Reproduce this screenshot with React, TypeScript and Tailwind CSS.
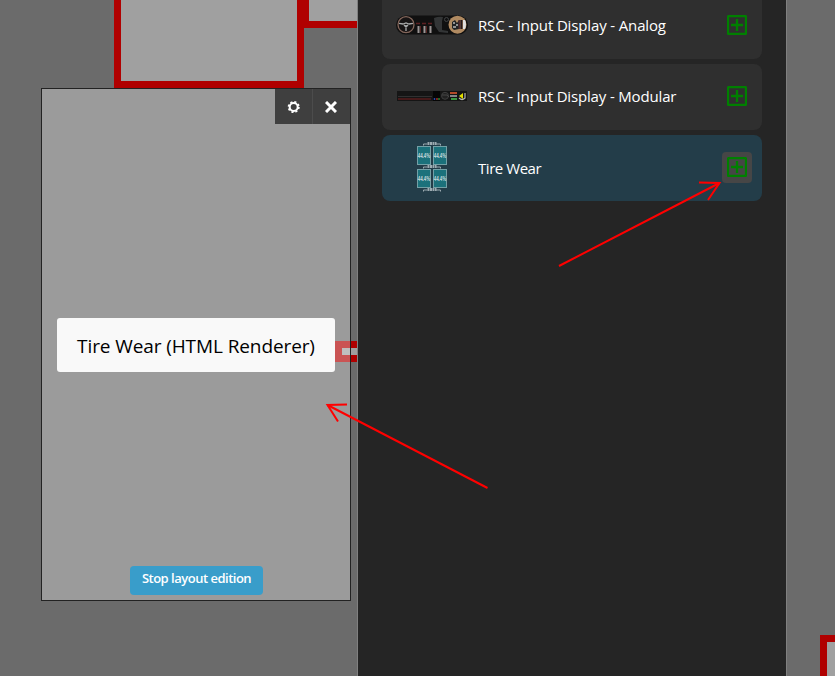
import React from "react";

function AddIcon() {
  return (
    <svg width="20" height="20" viewBox="0 0 20 20" fill="none" stroke="#008000" strokeWidth="2.3">
      <rect x="1" y="1" width="18" height="18" rx="1" />
      <path d="M4 10h12M10 4v12" />
    </svg>
  );
}

function AnalogThumb() {
  return (
    <svg width="72" height="20" viewBox="0 0 72 20" className="relative -top-px">
      <rect x="0" y="0.5" width="72" height="19" rx="9.5" fill="#101010" />
      <circle cx="10" cy="9.7" r="8" fill="#171414" stroke="#83665b" strokeWidth="1.3" />
      <path d="M3 8.3 7 9l3-1 3 1 4-.7M8 10l2 2 2-2M10 10v6" fill="none" stroke="#a8aaaa" strokeWidth="1.3" />
      <path d="M20 8.5h4M26 8.5h4M32 8.5h4" stroke="#5b2022" strokeWidth="1.5" />
      <path d="M22.5 11v7M28.5 11v7M34.5 11v7" stroke="#9b9595" strokeWidth="2" />
      <path d="M24.5 11v7M30.5 11v7" stroke="#572320" strokeWidth="1" />
      <path d="M38 3q5-2 9-1l-1 4v9l6 1v2l-9-1-4-6z" fill="#333536" />
      <circle cx="50.500" cy="4.500" r="2" fill="none" stroke="#414345" />
      <circle cx="61.500" cy="9.700" r="9" fill="#b08a61" />
      <path d="M56 7l3-2 2 3 2-3v9l-5 1-2-2z" fill="#202224" />
      <path d="M57 8h2M60 10h2M57 12h3" stroke="#b8b7b5" strokeWidth="1.3" />
      <path d="M63.500 5v9" stroke="#512b2d" strokeWidth="2" />
      <path d="M65.500 5v9" stroke="#24191c" strokeWidth="2" />
      <path d="M67 5h2q2 4 0 9h-2z" fill="#e0e0df" />
    </svg>
  );
}

function ModularThumb() {
  return (
    <svg width="70" height="10" viewBox="0 0 70 10" className="relative -top-px">
      <path d="M0 0h70v10H0z" fill="#151515" />
      <path d="M1 5.500h34" stroke="#303030" />
      <path d="M1 8h33" stroke="#782021" />
      <path d="M36 0h7v10h-7z" fill="#050505" />
      <path d="M37.500 7v2" stroke="#2749ae" strokeWidth="1.5" />
      <path d="M40 7v2" stroke="#a62b25" strokeWidth="1.5" />
      <path d="M42 7v2" stroke="#248433" strokeWidth="1.5" />
      <circle cx="48" cy="4.800" r="3.500" fill="#222" stroke="#3e3e3e" />
      <path d="M45 4h5l2 2" fill="none" stroke="#464646" />
      <path d="M53 2h7" stroke="#b44a28" strokeWidth="2" />
      <path d="M53 5h7" stroke="#aaa" strokeWidth="1.500" />
      <path d="M54 8h6" stroke="#3b9a40" strokeWidth="2" />
      <path d="M62 7q3 3 6 0V2" fill="none" stroke="#b4b4af" strokeWidth="1.200" />
      <path d="M62 5l4-3v6z" fill="#e4df00" />
    </svg>
  );
}

function TireThumb() {
  return (
    <svg width="32" height="52" viewBox="0 0 32 52" overflow="visible" className="relative -top-px">
      {[0, 23].map((y) => [0, 16].map((x) => (
        <g key={`${x}-${y}`}>
          <rect x={x + 1.5} y={y + 5.5} width="13" height="18" fill="#1b717b" stroke="#73a0a6" />
          <text x={x + 1.7} y={y + 17.3} fontFamily="Liberation Sans, sans-serif" fontSize="7" fontWeight="bold" textLength="12.5" lengthAdjust="spacingAndGlyphs" fill="#c9dadd">44.4%</text>
        </g>
      )))}
      {[2.5, 25.5, 48.500].map((y) => (
        <g key={y} fill="none" stroke="#9cabb1">
          <path d={`M7.5 ${y + 2}v-1.500h4M20 ${y + 0.5}h4.500v1.500`} />
          <path d={`M11.500 ${y}h9`} strokeWidth="3" strokeDasharray="2 .5" />
        </g>
      ))}
    </svg>
  );
}

interface OverlayRowProps {
  name: string;
  nameClass: string;
  selected?: boolean;
  children: React.ReactNode;
}

function OverlayRow({ name, nameClass, selected = false, children }: OverlayRowProps) {
  return (
    <div className={`flex h-[66px] shrink-0 items-center rounded-lg pl-[14px] pr-[10px] ${selected ? "bg-[#233d49]" : "bg-[#2f2f2f]"}`}>
      <div className="flex w-[72px] shrink-0 items-center justify-center">{children}</div>
      <span className={`ml-[10px] whitespace-nowrap text-[15px] leading-5 text-white ${nameClass}`}>{name}</span>
      <button aria-label={`Add ${name}`} className={`mb-[2px] ml-auto flex h-[31px] w-[30px] items-center justify-center rounded ${selected ? "bg-[#464646]" : ""}`}>
        <AddIcon />
      </button>
    </div>
  );
}

function TireWindow() {
  return (
    <section className="absolute left-[41px] top-[88px] flex h-[513px] w-[310px] flex-col border border-[#222] bg-white/33">
      <div className="flex h-[35px] shrink-0 justify-end">
        <button aria-label="Settings" className="flex w-[38px] items-center justify-center border-r border-[#4c4c4c] bg-[#3f3f3f]">
          <svg width="14" height="14" viewBox="0 0 14 14" fill="none" stroke="white">
            <circle cx="6.700" cy="7" r="4" strokeWidth="2" />
            <circle cx="6.700" cy="7" r="5.200" strokeWidth="1.700" strokeDasharray="2.100 1.984" />
          </svg>
        </button>
        <button aria-label="Close" className="flex w-[37px] items-center justify-center bg-[#3f3f3f] pr-[1px]">
          <svg width="12" height="12" viewBox="0 0 12 12" stroke="white" strokeWidth="3"><path d="M1 1l10 10M11 1L1 11" /></svg>
        </button>
      </div>
      <div className="ml-[15px] mt-[194px] flex h-[54px] w-[278px] shrink-0 items-center justify-center rounded-[3px] bg-[#f9f9f9] pt-[3px] text-black">
        <span className="whitespace-nowrap text-[19px] tracking-[-0.1px]">Tire Wear (HTML Renderer)</span>
      </div>
      <button className="mb-[5px] ml-[88px] mt-auto flex h-[29px] w-[133px] items-center justify-center rounded bg-[#399dca] pb-[3px] text-white">
        <span className="whitespace-nowrap text-[13px] font-semibold tracking-[-0.5px]">Stop layout edition</span>
      </button>
    </section>
  );
}

function Arrow({ line, head }: { line: string; head: string }) {
  return <g><path d={line} /><path d={head} /></g>;
}

export default function App() {
  return (
    <main className="relative flex h-[676px] w-[835px] overflow-hidden bg-[#6b6b6b] font-['Open_Sans','Noto_Sans',sans-serif]">
      <section className="relative w-[358px] shrink-0 overflow-hidden border-r border-[#808080]">
        <div className="absolute left-[302px] top-[-20px] h-[48px] w-[80px] border-[7px] border-[#b00000] bg-[#a0a0a0]" />
        <div className="absolute left-[114px] top-[-20px] h-[108px] w-[190px] border-[7px] border-[#b00000] bg-[#a0a0a0]" />
        <div className="absolute left-[335px] top-[341px] h-[21px] w-[60px] border-[7px] border-[#b00000] bg-[#a0a0a0]" />
        <TireWindow />
      </section>
      <aside className="-mt-[7px] flex w-[428px] shrink-0 flex-col gap-[5px] bg-[#252525] pl-[24px] pr-[24px]">
        <OverlayRow name="RSC - Input Display - Analog" nameClass="tracking-[-0.14px] pb-[2px]"><AnalogThumb /></OverlayRow>
        <OverlayRow name="RSC - Input Display - Modular" nameClass="tracking-[-0.16px] pb-[2px]"><ModularThumb /></OverlayRow>
        <OverlayRow name="Tire Wear" nameClass="tracking-[-0.45px]" selected><TireThumb /></OverlayRow>
      </aside>
      <section className="relative grow overflow-hidden border-l border-[#808080]">
        <div className="absolute left-[33px] top-[635px] h-[80px] w-[80px] border-[7px] border-[#b00000] bg-[#a0a0a0]" />
      </section>
      <svg className="pointer-events-none absolute inset-0" width="835" height="676" fill="none" stroke="#ff0000" strokeWidth="2">
        <Arrow line="M559 266L719.500 183" head="M699 182.500L719.500 183L708 200" />
        <Arrow line="M487.500 488L327.500 405" head="M347 404.500L327.500 405L338 421.500" />
      </svg>
    </main>
  );
}
